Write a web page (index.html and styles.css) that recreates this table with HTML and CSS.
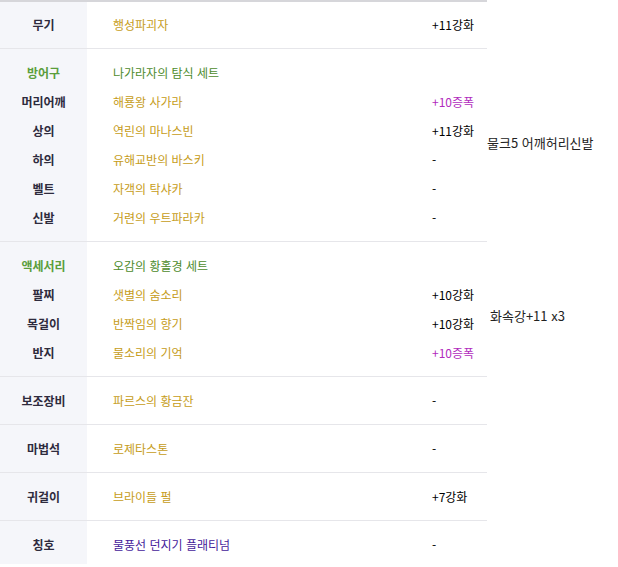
FILE: index.html
```html
<!DOCTYPE html>
<html lang="ko">
<head>
    <meta charset="UTF-8">
    <title>장비</title>
    <link rel="stylesheet" href="styles.css">
</head>
<body>
    <div class="equip">
        <div class="section">
            <div class="block">
                <div class="label">무기</div>
                <div class="name gold">행성파괴자</div>
                <div class="value">+11강화</div>
            </div>
        </div>

        <div class="section">
            <div class="block">
                <div class="label green">방어구</div>
                <div class="name set">나가라자의 탐식 세트</div>
                <div class="value"></div>

                <div class="label">머리어깨</div>
                <div class="name gold">해룡왕 사가라</div>
                <div class="value purple">+10증폭</div>

                <div class="label">상의</div>
                <div class="name gold">역린의 마나스빈</div>
                <div class="value">+11강화</div>

                <div class="label">하의</div>
                <div class="name gold">유해교반의 바스키</div>
                <div class="value">-</div>

                <div class="label">벨트</div>
                <div class="name gold">자객의 탁샤카</div>
                <div class="value">-</div>

                <div class="label">신발</div>
                <div class="name gold">거련의 우트파라카</div>
                <div class="value">-</div>
            </div>
            <div class="note note-armor">물크5 어깨허리신발</div>
        </div>

        <div class="section">
            <div class="block">
                <div class="label green">액세서리</div>
                <div class="name set">오감의 황홀경 세트</div>
                <div class="value"></div>

                <div class="label">팔찌</div>
                <div class="name gold">샛별의 숨소리</div>
                <div class="value">+10강화</div>

                <div class="label">목걸이</div>
                <div class="name gold">반짝임의 향기</div>
                <div class="value">+10강화</div>

                <div class="label">반지</div>
                <div class="name gold">물소리의 기억</div>
                <div class="value purple">+10증폭</div>
            </div>
            <div class="note note-acc">화속강+11 x3</div>
        </div>

        <div class="section">
            <div class="block">
                <div class="label">보조장비</div>
                <div class="name gold">파르스의 황금잔</div>
                <div class="value">-</div>
            </div>
        </div>

        <div class="section">
            <div class="block">
                <div class="label">마법석</div>
                <div class="name gold">로제타스톤</div>
                <div class="value">-</div>
            </div>
        </div>

        <div class="section">
            <div class="block">
                <div class="label">귀걸이</div>
                <div class="name gold">브라이들 펄</div>
                <div class="value">+7강화</div>
            </div>
        </div>

        <div class="section last">
            <div class="block">
                <div class="label">칭호</div>
                <div class="name title">물풍선 던지기 플래티넘</div>
                <div class="value">-</div>
            </div>
        </div>
    </div>
</body>
</html>
```

FILE: styles.css
```css
body {
    margin: 0;
    background: #fff;
    font-family: "Noto Sans CJK KR", "Noto Sans", sans-serif;
    font-size: 12px;
    color: #000;
}

.equip {
    border-top: 2px solid #d6d6da;
    width: 487px;
}

.section {
    display: flex;
    border-top: 1px solid #e6e6ea;
    width: 487px;
}

.section:first-child {
    border-top: none;
}

.block {
    width: 487px;
    flex-shrink: 0;
    display: grid;
    grid-template-columns: 87px 345px 55px;
    grid-auto-rows: 29px;
    align-items: center;
    padding: 9px 0;
    background: linear-gradient(to right, #f5f6fa 87px, #fff 87px);
}

.section:first-child .block {
    padding: 8px 0 9px;
}

.section.last .block {
    padding-bottom: 5px;
}

.label {
    text-align: center;
    font-weight: bold;
    color: #2e2b3d;
    line-height: 29px;
}

.label.green {
    color: #5b9e3c;
}

.name {
    padding-left: 26px;
    line-height: 29px;
    white-space: nowrap;
}

.value {
    line-height: 29px;
    white-space: nowrap;
}

.gold {
    color: #c69c20;
}

.set {
    color: #4d8b2c;
}

.purple {
    color: #b12bbd;
}

.title {
    color: #45199a;
}

.note {
    flex-shrink: 0;
    white-space: nowrap;
    font-size: 13px;
    color: #222;
}

.note-armor {
    align-self: center;
    margin-bottom: 6px;
}

.note-acc {
    align-self: center;
    margin-left: 3px;
    margin-top: 13px;
}
```
